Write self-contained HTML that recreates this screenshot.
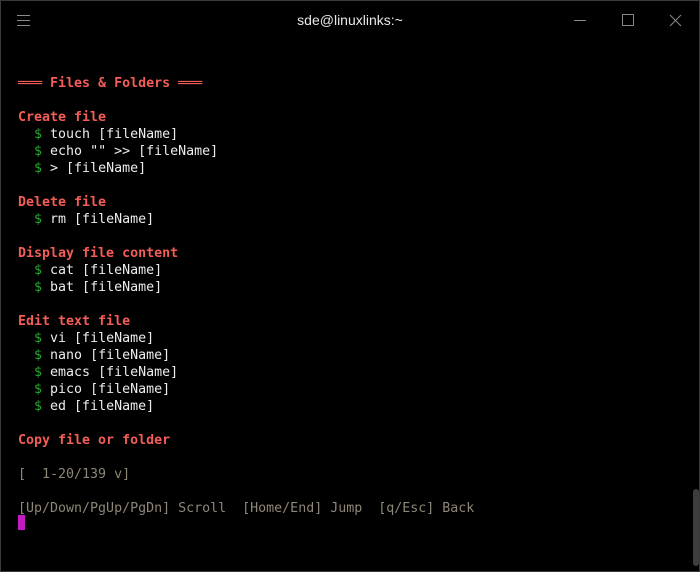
<!DOCTYPE html>
<html><head><meta charset="utf-8"><style>
html,body{margin:0;padding:0;background:#000;}
body{width:700px;height:572px;position:relative;overflow:hidden;}
.frame{position:absolute;left:0;top:0;width:698px;height:570px;border:1px solid #3a3a3a;background:#000;}
.title{position:absolute;left:0;top:12px;width:700px;text-align:center;color:#e8e8e8;font:14px "Liberation Sans",sans-serif;}
.term{position:absolute;left:18px;top:41px;font-family:"DejaVu Sans Mono","Liberation Mono",monospace;font-size:13.3px;line-height:17px;white-space:pre;color:#ececec;}
.r{color:#f25d58;font-weight:bold}
.g{color:#27a62d}
.f{color:#8e8676}
.cur{position:absolute;left:18px;top:515px;width:7px;height:15px;background:#c11bc1;}
.sb{position:absolute;left:693px;top:489px;width:6px;height:77px;background:#3d3d3d;border-radius:3px;}
</style></head><body>
<div class="frame"></div>
<svg style="position:absolute;left:17px;top:14px" width="14" height="12"><path d="M0 1.5H13M0 6.5H13M0 11.5H13" stroke="#8a8a8a" stroke-width="1"/></svg>
<div class="title">sde@linuxlinks:~</div>
<svg style="position:absolute;left:570px;top:12px" width="120" height="18">
<path d="M4 8.5H16" stroke="#8a8a8a"/>
<rect x="52.5" y="2.5" width="11" height="11" fill="none" stroke="#8a8a8a"/>
<path d="M100 3L111 14M111 3L100 14" stroke="#8a8a8a"/>
</svg>
<div class="term">

<span class="r">═══ Files &amp; Folders ═══</span>

<span class="r">Create file</span>
  <span class="g">$</span> touch [fileName]
  <span class="g">$</span> echo "" &gt;&gt; [fileName]
  <span class="g">$</span> &gt; [fileName]

<span class="r">Delete file</span>
  <span class="g">$</span> rm [fileName]

<span class="r">Display file content</span>
  <span class="g">$</span> cat [fileName]
  <span class="g">$</span> bat [fileName]

<span class="r">Edit text file</span>
  <span class="g">$</span> vi [fileName]
  <span class="g">$</span> nano [fileName]
  <span class="g">$</span> emacs [fileName]
  <span class="g">$</span> pico [fileName]
  <span class="g">$</span> ed [fileName]

<span class="r">Copy file or folder</span>

<span class="f">[  1-20/139 v]</span>

<span class="f">[Up/Down/PgUp/PgDn] Scroll  [Home/End] Jump  [q/Esc] Back</span></div>
<div class="cur"></div>
<div class="sb"></div>
</body></html>
